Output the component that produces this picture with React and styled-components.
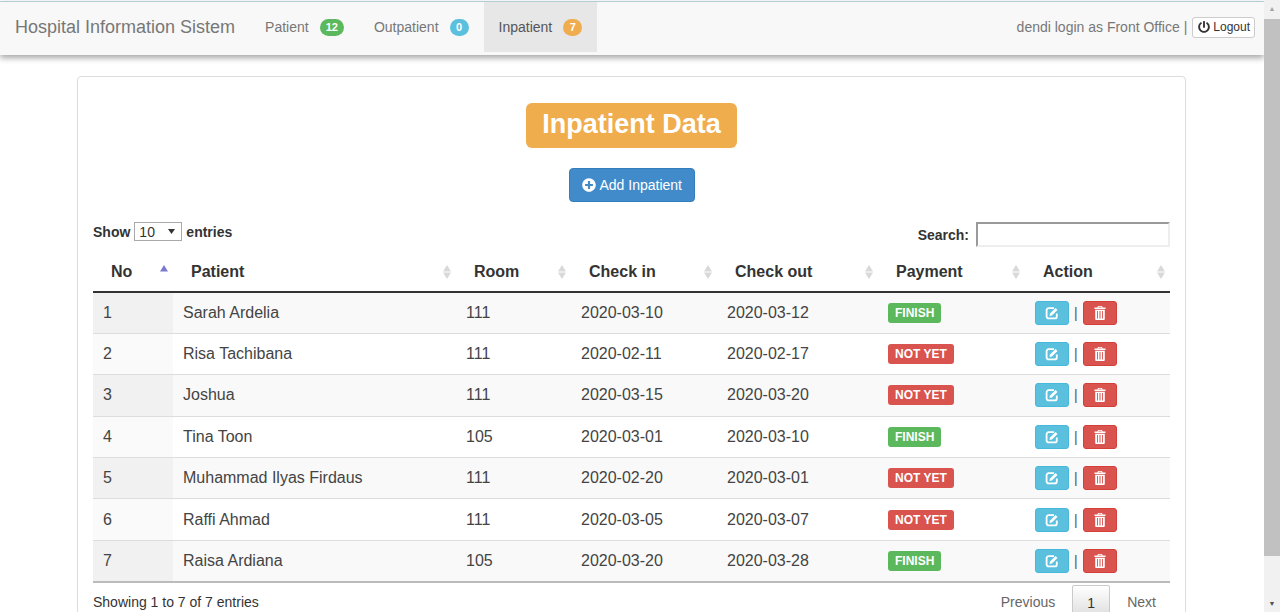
import styled, { createGlobalStyle } from "styled-components";
import { FaPlusCircle, FaPowerOff } from "react-icons/fa";

const GlobalStyle = createGlobalStyle`
  html, body {
    margin: 0;
    padding: 0;
    height: 612px;
    overflow: hidden;
    background: #fff;
    font-family: "Liberation Sans", Arial, sans-serif;
    color: #333;
  }
  * { box-sizing: border-box; }
`;

const inpatients = [
  { no: 1, name: "Sarah Ardelia", room: 111, checkIn: "2020-03-10", checkOut: "2020-03-12", paid: true },
  { no: 2, name: "Risa Tachibana", room: 111, checkIn: "2020-02-11", checkOut: "2020-02-17", paid: false },
  { no: 3, name: "Joshua", room: 111, checkIn: "2020-03-15", checkOut: "2020-03-20", paid: false },
  { no: 4, name: "Tina Toon", room: 105, checkIn: "2020-03-01", checkOut: "2020-03-10", paid: true },
  { no: 5, name: "Muhammad Ilyas Firdaus", room: 111, checkIn: "2020-02-20", checkOut: "2020-03-01", paid: false },
  { no: 6, name: "Raffi Ahmad", room: 111, checkIn: "2020-03-05", checkOut: "2020-03-07", paid: false },
  { no: 7, name: "Raisa Ardiana", room: 105, checkIn: "2020-03-20", checkOut: "2020-03-28", paid: true },
];

const columns = [
  { label: "No", width: 80, active: true },
  { label: "Patient", width: 283 },
  { label: "Room", width: 115 },
  { label: "Check in", width: 146 },
  { label: "Check out", width: 161 },
  { label: "Payment", width: 147 },
  { label: "Action", width: 145 },
];

const Shell = styled.div`
  display: flex;
  width: 1280px;
  height: 612px;
  overflow: hidden;
`;

const Main = styled.div`
  width: 1264px;
  height: 612px;
  overflow: hidden;
`;

const Navbar = styled.nav`
  display: flex;
  align-items: stretch;
  height: 54px;
  margin-top: 1px;
  padding: 0 9px 3px 0;
  background: #f8f8f8;
  border-top: 1px solid #b2cdd6;
  box-shadow: 0 3px 6px rgba(0, 0, 0, 0.35);
  position: relative;
  z-index: 2;
`;

const Brand = styled.div`
  display: flex;
  align-items: center;
  padding: 0 15px;
  font-size: 18px;
  color: #777;
`;

const NavItem = styled.div`
  display: flex;
  align-items: center;
  gap: 11px;
  padding: 0 15px;
  font-size: 14px;
  color: ${(p) => (p.$active ? "#555" : "#777")};
  background: ${(p) => (p.$active ? "#e7e7e7" : "transparent")};
`;

const Counter = styled.span`
  display: inline-block;
  min-width: 19px;
  padding: 3px 6px;
  font-size: 11px;
  line-height: 11px;
  font-weight: bold;
  text-align: center;
  color: #fff;
  border-radius: 10px;
  background: ${(p) => p.$color};
`;

const NavRight = styled.div`
  margin-left: auto;
  display: flex;
  align-items: center;
  gap: 5px;
  font-size: 14px;
  color: #777;
`;

const LogoutButton = styled.button`
  display: flex;
  align-items: center;
  gap: 3px;
  height: 21px;
  padding: 0 4px 0 5px;
  background: #fff;
  border: 1px solid #ccc;
  border-radius: 3px;
  font-family: inherit;
  font-size: 12px;
  color: #333;
`;

const Panel = styled.section`
  width: 1109px;
  margin: 21px 0 0 77px;
  padding: 26px 15px 0;
  height: 700px;
  border: 1px solid #ddd;
  border-radius: 4px;
  background: #fff;
  box-shadow: 0 1px 1px rgba(0, 0, 0, 0.05);
`;

const Heading = styled.div`
  display: flex;
  justify-content: center;
`;

const Title = styled.h1`
  margin: 0;
  width: 211px;
  height: 45px;
  line-height: 43px;
  text-align: center;
  font-size: 27px;
  font-weight: bold;
  color: #fff;
  background: #f0ad4e;
  border-radius: 6px;
`;

const AddRow = styled.div`
  display: flex;
  justify-content: center;
  margin-top: 20px;
`;

const AddButton = styled.button`
  display: flex;
  align-items: center;
  gap: 4px;
  width: 126px;
  height: 34px;
  padding: 0 0 0 12px;
  background: #428bca;
  border: 1px solid #357ebd;
  border-radius: 4px;
  color: #fff;
  font-family: inherit;
  font-size: 14px;
`;

const Controls = styled.div`
  display: flex;
  justify-content: space-between;
  align-items: flex-start;
  margin-top: 20px;
  font-size: 14px;
  font-weight: bold;
  height: 30px;
`;

const Length = styled.label`
  display: flex;
  align-items: center;
  gap: 4px;
  height: 19px;
`;

const SelectWrap = styled.span`
  position: relative;
  display: block;
  width: 48px;
  height: 19px;
`;

const EntriesSelect = styled.select`
  appearance: none;
  display: block;
  width: 48px;
  height: 19px;
  padding: 0 0 0 4px;
  background: #fff;
  border: 1px solid #a9a9a9;
  border-radius: 0;
  font-family: inherit;
  font-size: 14px;
  color: #333;
`;

const SelectArrow = styled.svg`
  position: absolute;
  right: 7px;
  top: 7px;
  pointer-events: none;
`;

const SearchBox = styled.label`
  display: flex;
  align-items: center;
  gap: 7px;
`;

const SearchInput = styled.input`
  width: 194px;
  height: 25px;
  padding: 1px;
  border: 2px inset #eee;
  background: #fff;
`;

const Table = styled.table`
  width: 1077px;
  table-layout: fixed;
  border-collapse: collapse;
  font-size: 16px;
`;

const HeadCell = styled.th`
  position: relative;
  width: ${(p) => p.$width}px;
  height: 40px;
  padding: 0 18px;
  text-align: left;
  font-size: 16px;
  font-weight: bold;
  color: #333;
  border-bottom: 2px solid #333;
`;

const SortArrows = styled.svg`
  position: absolute;
  right: 5px;
  top: 13px;
`;

const Row = styled.tr`
  height: 41.4px;
  background: ${(p) => (p.$odd ? "#f9f9f9" : "#fff")};
  border-bottom: 1px solid #ddd;

  &:last-child {
    border-bottom: 2px solid #bbb;
  }
`;

const Cell = styled.td`
  padding: 0 10px;
  color: #444;
  background: ${(p) => (p.$sorted ? (p.$odd ? "#f1f1f1" : "#fafafa") : "transparent")};
`;

const Status = styled.span`
  display: inline-block;
  padding: 4px 7px;
  font-size: 12px;
  line-height: 12px;
  font-weight: bold;
  color: #fff;
  border-radius: 3px;
  background: ${(p) => (p.$paid ? "#5cb85c" : "#d9534f")};
`;

const Actions = styled.div`
  display: flex;
  align-items: center;
  gap: 5px;
  color: #555;
  font-size: 14px;
`;

const IconButton = styled.button`
  display: flex;
  align-items: center;
  justify-content: center;
  width: 34px;
  height: 24px;
  padding: 0;
  border-radius: 3px;
  border: 1px solid ${(p) => (p.$danger ? "#d43f3a" : "#46b8da")};
  background: ${(p) => (p.$danger ? "#d9534f" : "#5bc0de")};
  color: #fff;
`;

const Footer = styled.div`
  display: flex;
  justify-content: space-between;
  align-items: flex-start;
  height: 40px;
  font-size: 14px;
`;

const Info = styled.div`
  padding-top: 11px;
  color: #333;
`;

const Pager = styled.div`
  display: flex;
  align-items: flex-start;
  gap: 17px;
  padding: 2px 14px 0 0;
  color: #666;
`;

const PageLink = styled.span`
  padding-top: 9px;
  height: 34px;
`;

const PageCurrent = styled.span`
  width: 38px;
  height: 34px;
  padding-top: 9px;
  text-align: center;
  color: #333;
  border: 1px solid #cacaca;
  border-radius: 2px;
  background: linear-gradient(to bottom, #fff 0%, #dcdcdc 100%);
`;

const Scrollbar = styled.div`
  display: flex;
  flex-direction: column;
  width: 16px;
  height: 612px;
  background: #f1f1f1;
`;

const ScrollArrow = styled.div`
  height: 17px;
  display: flex;
  align-items: center;
  justify-content: center;
  font-size: 7px;
  line-height: 7px;
  color: ${(p) => p.$color};
`;

const ScrollThumb = styled.div`
  height: 537px;
  margin: 2px 0 auto;
  background: #c1c1c1;
`;

function SortIcon({ active }) {
  return (
    <SortArrows width="8" height="14" viewBox="0 0 8 14" aria-hidden="true">
      <path d="M0 6.5 4 0l4 6.5z" fill={active ? "#7a7ad0" : "#d9d9d9"} />
      {!active && <path d="M0 7.5h8L4 14z" fill="#d9d9d9" />}
    </SortArrows>
  );
}

function EditIcon() {
  return (
    <svg width="14" height="14" viewBox="0 0 14 14" fill="none" aria-hidden="true">
      <path
        d="M9 2.2H3.6A2 2 0 0 0 1.6 4.2v6.2a2 2 0 0 0 2 2h6.2a2 2 0 0 0 2-2V7.6"
        stroke="currentColor"
        strokeWidth="1.8"
      />
      <path d="M5 7.6 10.6 2l1.9 1.9-5.6 5.6-2.4.5z" fill="currentColor" />
    </svg>
  );
}

function TrashIcon() {
  return (
    <svg width="12" height="14" viewBox="0 0 12 14" fill="currentColor" aria-hidden="true">
      <path d="M4 0h4l.6 1.5H11.5V3H.5V1.5h2.9zM4.7.8l-.3.7h3.2l-.3-.7z" />
      <path
        fillRule="evenodd"
        d="M1.2 3.8h9.6V13a1 1 0 0 1-1 1H2.2a1 1 0 0 1-1-1zM3 5v7.5h.9V5zm2.5 0v7.5h1V5zm2.6 0v7.5H9V5z"
      />
    </svg>
  );
}

export default function App() {
  return (
    <Shell>
      <GlobalStyle />
      <Main>
        <Navbar>
          <Brand>Hospital Information Sistem</Brand>
          <NavItem>
            Patient <Counter $color="#5cb85c">12</Counter>
          </NavItem>
          <NavItem>
            Outpatient <Counter $color="#5bc0de">0</Counter>
          </NavItem>
          <NavItem $active>
            Inpatient <Counter $color="#f0ad4e">7</Counter>
          </NavItem>
          <NavRight>
            dendi login as Front Office |
            <LogoutButton>
              <FaPowerOff size={12} /> Logout
            </LogoutButton>
          </NavRight>
        </Navbar>

        <Panel>
          <Heading>
            <Title>Inpatient Data</Title>
          </Heading>
          <AddRow>
            <AddButton>
              <FaPlusCircle size={14} /> Add Inpatient
            </AddButton>
          </AddRow>

          <Controls>
            <Length>
              Show
              <SelectWrap>
                <EntriesSelect defaultValue="10">
                  <option value="10">10</option>
                  <option value="25">25</option>
                  <option value="50">50</option>
                </EntriesSelect>
                <SelectArrow width="7" height="5" viewBox="0 0 7 5" aria-hidden="true">
                  <path d="M0 0h7L3.5 5z" fill="#333" />
                </SelectArrow>
              </SelectWrap>
              entries
            </Length>
            <SearchBox>
              Search:
              <SearchInput type="search" />
            </SearchBox>
          </Controls>

          <Table>
            <thead>
              <tr>
                {columns.map((col) => (
                  <HeadCell key={col.label} $width={col.width}>
                    {col.label}
                    <SortIcon active={col.active} />
                  </HeadCell>
                ))}
              </tr>
            </thead>
            <tbody>
              {inpatients.map((p, i) => (
                <Row key={p.no} $odd={i % 2 === 0}>
                  <Cell $sorted $odd={i % 2 === 0}>{p.no}</Cell>
                  <Cell>{p.name}</Cell>
                  <Cell>{p.room}</Cell>
                  <Cell>{p.checkIn}</Cell>
                  <Cell>{p.checkOut}</Cell>
                  <Cell>
                    <Status $paid={p.paid}>{p.paid ? "FINISH" : "NOT YET"}</Status>
                  </Cell>
                  <Cell>
                    <Actions>
                      <IconButton aria-label="Edit">
                        <EditIcon />
                      </IconButton>
                      |
                      <IconButton $danger aria-label="Delete">
                        <TrashIcon />
                      </IconButton>
                    </Actions>
                  </Cell>
                </Row>
              ))}
            </tbody>
          </Table>

          <Footer>
            <Info>Showing 1 to 7 of 7 entries</Info>
            <Pager>
              <PageLink>Previous</PageLink>
              <PageCurrent>1</PageCurrent>
              <PageLink>Next</PageLink>
            </Pager>
          </Footer>
        </Panel>
      </Main>
      <Scrollbar>
        <ScrollArrow $color="#a3a3a3">▲</ScrollArrow>
        <ScrollThumb />
        <ScrollArrow $color="#505050">▼</ScrollArrow>
      </Scrollbar>
    </Shell>
  );
}
